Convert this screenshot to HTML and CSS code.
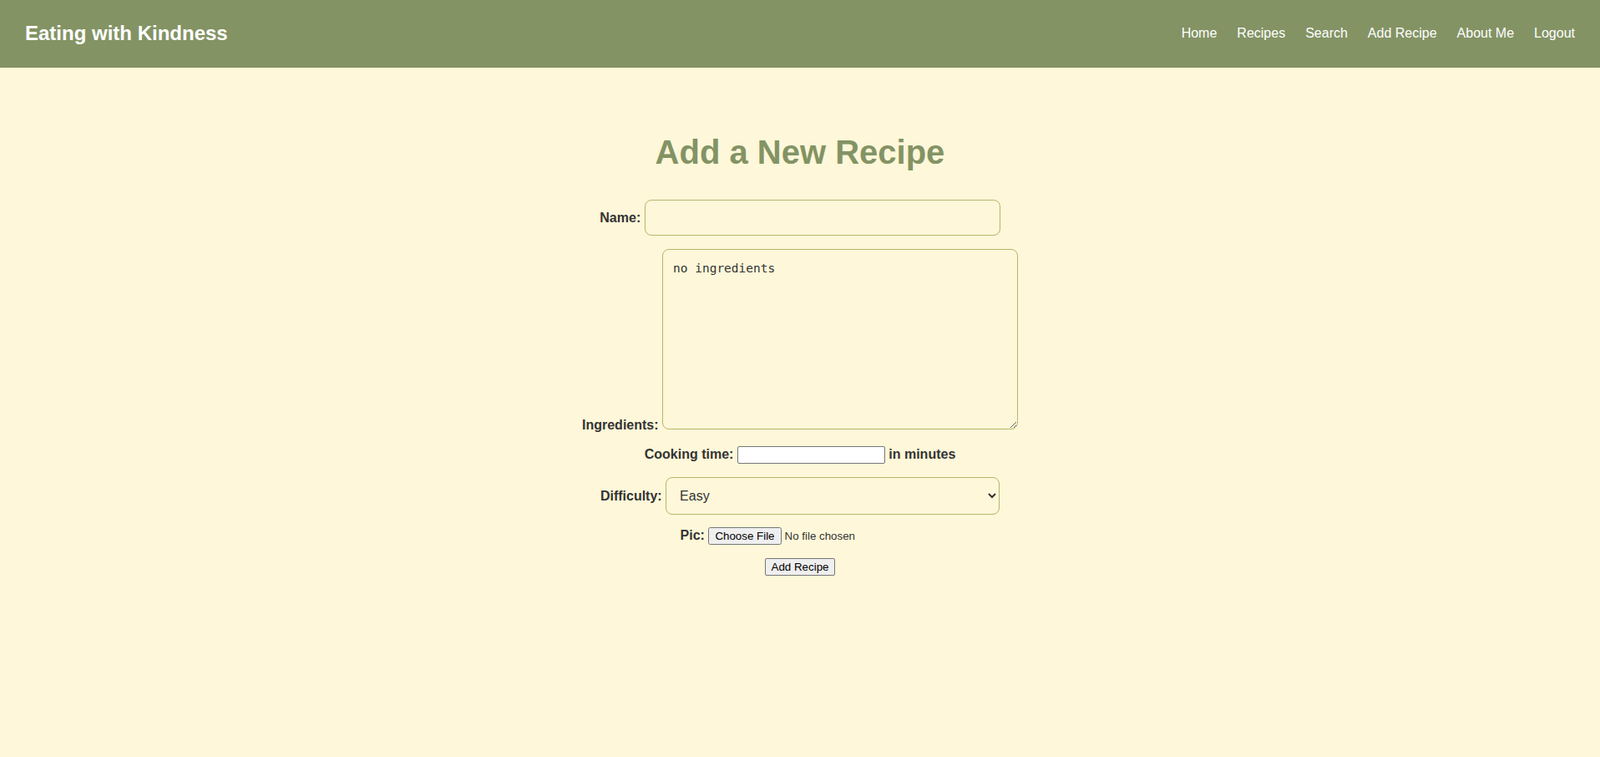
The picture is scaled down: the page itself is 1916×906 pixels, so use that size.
FILE: index.html
```html
<!DOCTYPE html>
<html lang="en">
<head>
<meta charset="utf-8">
<title>Add a New Recipe - Eating with Kindness</title>
<link rel="stylesheet" href="styles.css">
</head>
<body>
<header class="site-header">
  <a class="brand" href="#">Eating with Kindness</a>
  <nav class="nav">
    <a href="#">Home</a>
    <a href="#">Recipes</a>
    <a href="#">Search</a>
    <a href="#">Add Recipe</a>
    <a href="#">About Me</a>
    <a href="#">Logout</a>
  </nav>
</header>
<main class="main">
  <h1 class="page-title">Add a New Recipe</h1>
  <form class="recipe-form">
    <div class="row">
      <label class="lbl" for="name">Name:</label>
      <input class="field field-name" id="name" type="text">
    </div>
    <div class="row">
      <label class="lbl" for="ingredients">Ingredients:</label>
      <textarea class="field field-area" id="ingredients">no ingredients</textarea>
    </div>
    <div class="row">
      <label class="lbl" for="time">Cooking time:</label>
      <input class="plain-input" id="time" type="text">
      <span class="lbl">in minutes</span>
    </div>
    <div class="row row-select">
      <label class="lbl" for="difficulty">Difficulty:</label>
      <select class="field field-select" id="difficulty">
        <option>Easy</option>
        <option>Medium</option>
        <option>Hard</option>
      </select>
    </div>
    <div class="row">
      <label class="lbl" for="pic">Pic:</label>
      <input class="file-input" id="pic" type="file">
    </div>
    <div class="row">
      <button class="submit" type="submit">Add Recipe</button>
    </div>
  </form>
</main>
</body>
</html>
```

FILE: styles.css
```css
html, body {
  margin: 0;
  padding: 0;
}

body {
  background: #fef7d9;
  font-family: "Liberation Sans", Arial, sans-serif;
  font-size: 16px;
  color: #333333;
}

.site-header {
  background: #839364;
  height: 81px;
  display: flex;
  align-items: center;
  justify-content: space-between;
  padding: 0 30px 2px;
  box-sizing: border-box;
}

.brand {
  color: #ffffff;
  font-weight: bold;
  font-size: 24px;
  text-decoration: none;
}

.nav {
  display: flex;
  gap: 24px;
}

.nav a {
  color: #ffffff;
  text-decoration: none;
  font-size: 16px;
}

.main {
  padding-top: 47px;
  text-align: center;
}

.page-title {
  color: #839364;
  font-size: 40px;
  font-weight: bold;
  margin: 32px 0 34px;
}

.recipe-form {
  margin: 0;
}

.row {
  margin: 0 0 16px;
}

.row-select {
  margin-bottom: 15px;
}

.lbl {
  font-weight: bold;
  font-size: 16px;
  color: #333333;
}

.field {
  background: #fef7d9;
  border: 1px solid #b9b56b;
  border-radius: 8px;
  box-sizing: border-box;
  color: #333333;
  font-family: "Liberation Sans", Arial, sans-serif;
  font-size: 16px;
  outline: none;
}

.field-name {
  width: 426px;
  height: 43px;
  padding: 0 10px;
}

.field-area {
  width: 426px;
  height: 216px;
  padding: 14px 12px 12px;
  font-family: "DejaVu Sans Mono", "Liberation Mono", monospace;
  font-size: 14.5px;
  resize: vertical;
  vertical-align: baseline;
}

.field-select {
  width: 400px;
  height: 45px;
  padding: 0 12px;
}

.plain-input {
  width: 177px;
  height: 21px;
  box-sizing: border-box;
  font-family: "Liberation Sans", Arial, sans-serif;
  font-size: 13.33px;
  background: #ffffff;
  border: 1px solid #767676;
  border-radius: 2px;
  padding: 1px 2px;
}

.file-input {
  font-family: "Liberation Sans", Arial, sans-serif;
  font-size: 13.33px;
  color: #333333;
  width: 253px;
}

.submit {
  font-family: "Liberation Sans", Arial, sans-serif;
  font-size: 13.33px;
  color: #000000;
  background: #efefef;
  border: 1px solid #767676;
  border-radius: 2px;
  padding: 2px 7px;
}
```
